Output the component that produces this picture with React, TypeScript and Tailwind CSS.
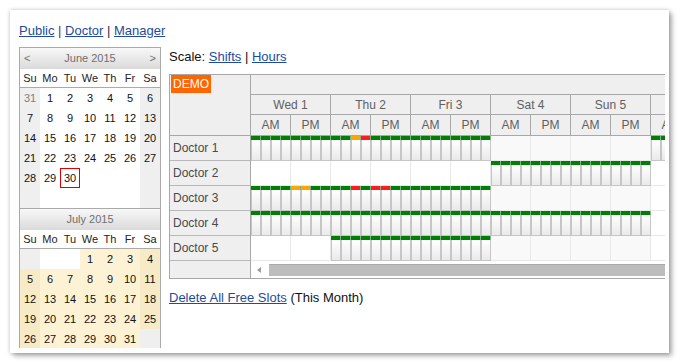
import React from "react";

type Cell = { label: string; col: number; kind: "day" | "other" | "empty"; today?: boolean };

const buildJune = (): Cell[] => {
  const cells: Cell[] = [{ label: "31", col: 0, kind: "other" }];
  for (let d = 1; d <= 30; d++) cells.push({ label: String(d), col: d % 7, kind: "day", today: d === 30 });
  while (cells.length < 42) cells.push({ label: "", col: cells.length % 7, kind: "empty" });
  return cells;
};

const buildJuly = (): Cell[] => {
  const cells: Cell[] = [];
  for (let i = 0; i < 3; i++) cells.push({ label: "", col: i, kind: "empty" });
  for (let d = 1; d <= 31; d++) cells.push({ label: String(d), col: (d + 2) % 7, kind: "day" });
  while (cells.length < 42) cells.push({ label: "", col: cells.length % 7, kind: "empty" });
  return cells;
};

const dayNames = ["Su", "Mo", "Tu", "We", "Th", "Fr", "Sa"];

const Month = ({ title, cells, nav, selected }: { title: string; cells: Cell[]; nav?: boolean; selected?: boolean }) => {
  return (
    <div>
      <div className="flex h-[21px] items-center justify-between bg-linear-to-b from-[#f8f8f8] to-[#dadada] px-[4px] text-[11px] text-[#707070]">
        <span className="w-[8px]">{nav ? "<" : ""}</span>
        <span>{title}</span>
        <span className="w-[8px] text-right">{nav ? ">" : ""}</span>
      </div>
      <div className="grid h-[19px] grid-cols-7 border-b border-[#aaaaaa] bg-white text-[11px] text-[#222]">
        {dayNames.map((n) => (
          <div key={n} className="flex items-center justify-center">
            {n}
          </div>
        ))}
      </div>
      <div className="grid grid-cols-7">
        {cells.map((c, i) => {
          const weekend = c.col === 0 || c.col === 6;
          let bg = weekend ? "bg-[#efefef]" : "bg-white";
          if (selected && c.kind === "day") bg = weekend ? "bg-[#f7eac6]" : "bg-[#fdf3d4]";
          return (
            <div
              key={i}
              className={`flex h-[20px] items-center justify-center text-[11px] ${bg} ${
                c.kind === "other" ? "text-[#808080]" : "text-[#111]"
              } ${c.today ? "border border-[#e00000]" : ""}`}
            >
              {c.label}
            </div>
          );
        })}
      </div>
    </div>
  );
};

// only the days that show (Mon 6 is cut by the frame)
const days = ["Wed 1", "Thu 2", "Fri 3", "Sat 4", "Sun 5", "Mon 6"];

type Row = { name: string; halves: number[]; orange?: number[]; red?: number[] };

const rows: Row[] = [
  { name: "Doctor 1", halves: [0, 1, 2, 3, 4, 5, 10, 11], orange: [10], red: [11] },
  { name: "Doctor 2", halves: [6, 7, 8, 9] },
  { name: "Doctor 3", halves: [0, 1, 2, 3, 4, 5], orange: [4, 5], red: [10, 12, 13] },
  { name: "Doctor 4", halves: [0, 1, 2, 3, 4, 5, 6, 7, 8, 9] },
  { name: "Doctor 5", halves: [2, 3, 4, 5] },
];

const Slot = ({ color }: { color: string }) => (
  <div className="flex h-[25px] w-[10px] shrink-0 flex-col">
    <div className={`h-[4px] border-r border-r-[#7fb08f] ${color}`} />
    <div className="flex-1 border-x border-b border-[#c6c6c6] bg-linear-to-b from-white to-[#eaeaea]" />
  </div>
);

const ResourceRow = ({ row }: { row: Row }) => {
  const halves = Array.from({ length: 12 }, (_, i) => i);
  return (
    <div className="flex h-[25px]">
      {halves.map((h) => {
        if (row.halves.includes(h)) {
          return [0, 1, 2, 3].map((k) => {
            const idx = h * 4 + k;
            const color = row.orange?.includes(idx)
              ? "bg-[#ffa500]"
              : row.red?.includes(idx)
              ? "bg-[#ff1c1c]"
              : "bg-[#008000]";
            return <Slot key={idx} color={color} />;
          });
        }
        const weekend = h >= 6 && h <= 9;
        return (
          <div
            key={h}
            className={`h-[25px] w-[40px] shrink-0 border-r border-b border-[#e8e8e8] ${
              weekend ? "bg-[#f9f9f9]" : "bg-white"
            }`}
          />
        );
      })}
    </div>
  );
};

const Scheduler = () => {
  return (
    <div className="flex border-y border-l border-[#a8a8a8] text-[12px]">
      <div className="w-[81px] shrink-0 border-r border-[#a8a8a8] bg-[#efefef] text-[#4a4a4a]">
        <div className="h-[61px] border-b border-[#a8a8a8] pl-[1px]">
          <span className="inline-block h-[18px] bg-[#ff6600] px-[2px] text-[12px] leading-[18px] text-white">DEMO</span>
        </div>
        {rows.map((r) => (
          <div key={r.name} className="flex h-[25px] items-center border-b border-[#b8b8b8] pl-[3px]">
            {r.name}
          </div>
        ))}
        <div className="h-[17px]" />
      </div>
      <div className="min-w-0 flex-1 overflow-hidden">
        <div className="w-[480px] bg-[#efefef] text-[#606060]">
          <div className="h-[20px] border-b border-[#a8a8a8]" />
          <div className="flex h-[20px] border-b border-[#a8a8a8]">
            {days.map((d) => (
              <div key={d} className="flex w-[80px] shrink-0 items-center justify-center border-r border-[#a8a8a8]">
                {d}
              </div>
            ))}
          </div>
          <div className="flex h-[21px] border-b border-[#a8a8a8]">
            {days.map((d) => (
              <React.Fragment key={d}>
                <div className="flex w-[40px] shrink-0 items-center justify-center border-r border-[#a8a8a8]">AM</div>
                <div className="flex w-[40px] shrink-0 items-center justify-center border-r border-[#a8a8a8]">PM</div>
              </React.Fragment>
            ))}
          </div>
        </div>
        {rows.map((r) => (
          <ResourceRow key={r.name} row={r} />
        ))}
        <div className="flex h-[17px] items-center bg-white">
          <div className="ml-[6px] h-0 w-0 border-y-[3px] border-r-[4px] border-y-transparent border-r-[#9c9c9c]" />
          <div className="ml-[8px] h-[12px] flex-1 border-t border-[#a9a9a9] bg-[#bdbdbd]" />
        </div>
      </div>
    </div>
  );
};

const App = () => {
  return (
    <div className="h-[363px] w-[680px] overflow-hidden bg-white font-['Liberation_Sans',Arial,sans-serif] text-[#111]">
      <div className="ml-[10px] mt-[10px] h-[343px] w-[659px] bg-white shadow-[0_0_4px_rgba(0,0,0,0.22),3px_3px_5px_rgba(0,0,0,0.3)]">
        <div className="h-[338px] w-[655px] overflow-hidden pl-[9px] pt-[13px]">
          <div className="text-[13px] leading-[16px]">
            <a className="text-[#1d4b9f] underline">Public</a>
            <span className="text-[#6a1f6a]"> | </span>
            <a className="text-[#1d4b9f] underline">Doctor</a>
            <span className="text-[#1c2a55]"> | </span>
            <a className="text-[#1d4b9f] underline">Manager</a>
          </div>
          <div className="mt-[8px] flex items-start gap-[8px]">
            <div className="w-[142px] shrink-0 border border-[#a9a9a9]">
              <Month title="June 2015" cells={buildJune()} nav />
              <div className="border-t border-[#aaaaaa]">
                <Month title="July 2015" cells={buildJuly()} selected />
              </div>
            </div>
            <div className="min-w-0 flex-1">
              <div className="mt-[2px] text-[13px] leading-[16px]">
                Scale: <a className="text-[#1d4b9f] underline">Shifts</a> | <a className="text-[#1d4b9f] underline">Hours</a>
              </div>
              <div className="mt-[9px]">
                <Scheduler />
              </div>
              <div className="mt-[11px] text-[13px] leading-[16px]">
                <a className="text-[#1d4b9f] underline">Delete All Free Slots</a> (This Month)
              </div>
            </div>
          </div>
        </div>
      </div>
    </div>
  );
};

export default App;
